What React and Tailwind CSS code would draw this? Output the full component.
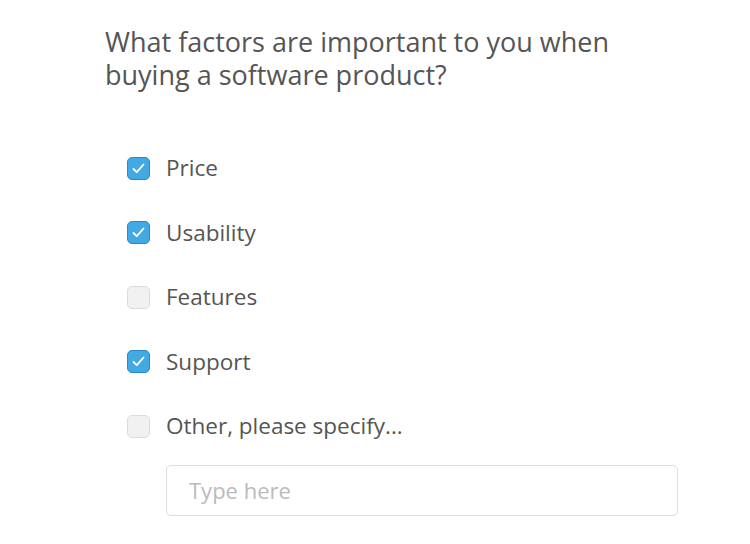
import React from "react";

const options = [
  { label: "Price", checked: true },
  { label: "Usability", checked: true },
  { label: "Features", checked: false },
  { label: "Support", checked: true },
  { label: "Other, please specify...", checked: false },
];

function Box({ checked }) {
  if (checked) {
    return (
      <span className="flex h-[23px] w-[23px] shrink-0 items-center justify-center rounded-[5px] border border-[#2b8ac6] bg-[#42a9e2]">
        <svg width="15" height="15" viewBox="0 0 15 15" fill="none">
          <path d="M2.5 8 L5.8 11.2 L12.5 3.5" stroke="white" strokeWidth="1.8" strokeLinecap="round" strokeLinejoin="round" />
        </svg>
      </span>
    );
  }
  return <span className="block h-[23px] w-[23px] shrink-0 rounded-[5px] border border-[#dcdcdc] bg-[#f1f1f1]" />;
}

export default function App() {
  return (
    <div className="min-h-[544px] w-[750px] bg-white" style={{ fontFamily: '"Open Sans", sans-serif' }}>
      <div className="pl-[105px] pt-[25px]">
        <h1 className="text-[27px] leading-[33px] text-[#555555] font-normal whitespace-nowrap">
          What factors are important to you when
          <br />
          buying a software product?
        </h1>
        <div className="mt-[65px] flex flex-col gap-[40.5px] pl-[22px]">
          {options.map((o) => (
            <label key={o.label} className="flex h-[24px] items-center gap-[16px]">
              <Box checked={o.checked} />
              <span className="text-[22.5px] text-[#555555] whitespace-nowrap">{o.label}</span>
            </label>
          ))}
        </div>
        <div className="mt-[27px] pl-[61px]">
          <div className="flex h-[51px] w-[512px] items-center rounded-[5px] border border-[#dddddd] px-[22px]">
            <span className="text-[22px] text-[#bbbbbb]">Type here</span>
          </div>
        </div>
      </div>
    </div>
  );
}
